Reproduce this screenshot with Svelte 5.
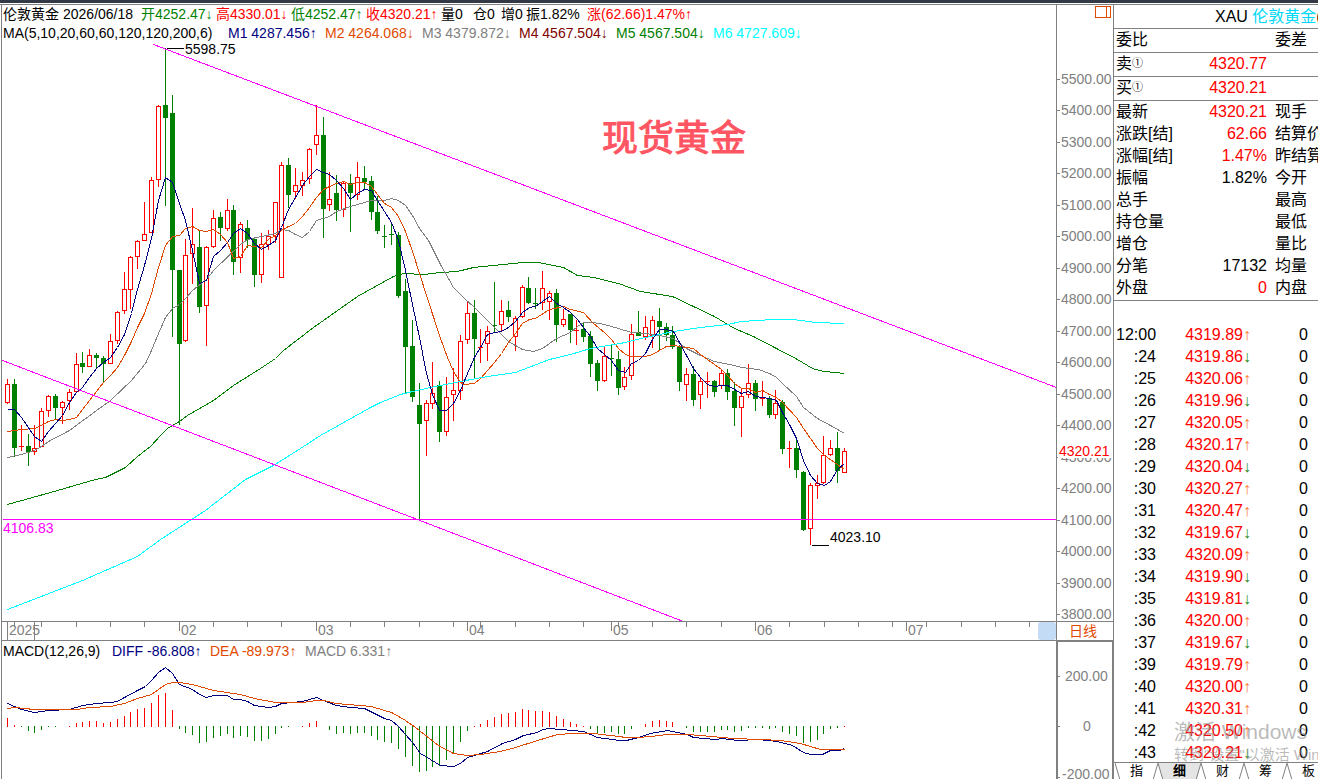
<script lang="ts">
	type Candle = [up: number, top: number, bottom: number, high: number, low: number];

	const candles: Candle[] = [
		[1, 384, 402, 379, 403], [0, 384, 447, 379, 456], [1, 446, 446, 425, 450], [0, 446, 451, 434, 465],
		[1, 448, 451, 425, 454], [1, 411, 446, 408, 446], [1, 396, 410, 395, 416], [0, 396, 407, 394, 419],
		[1, 402, 407, 401, 423], [1, 392, 400, 389, 409], [1, 364, 391, 353, 391], [0, 363, 366, 352, 372],
		[1, 355, 366, 349, 366], [0, 355, 357, 353, 368], [0, 358, 363, 356, 382], [1, 341, 363, 334, 363],
		[1, 312, 340, 311, 343], [1, 289, 310, 272, 313], [1, 257, 289, 256, 308], [1, 241, 256, 240, 268],
		[1, 234, 240, 202, 240], [1, 180, 232, 177, 232], [1, 106, 179, 105, 186], [0, 105, 117, 48, 205],
		[0, 113, 269, 95, 336], [0, 270, 343, 270, 424], [1, 255, 340, 239, 341], [1, 244, 253, 208, 283],
		[0, 247, 306, 230, 312], [1, 247, 305, 246, 345], [1, 218, 246, 210, 247], [0, 217, 227, 212, 240],
		[1, 210, 228, 199, 230], [0, 210, 261, 205, 274], [1, 224, 257, 222, 272], [0, 228, 239, 220, 247],
		[0, 239, 274, 238, 286], [1, 244, 274, 233, 282], [1, 236, 244, 230, 249], [1, 202, 236, 202, 242],
		[1, 165, 277, 162, 277], [0, 165, 194, 158, 207], [1, 185, 191, 168, 198], [1, 180, 185, 172, 195],
		[1, 149, 178, 148, 183], [1, 135, 144, 105, 154], [0, 135, 208, 117, 237], [1, 199, 204, 172, 210],
		[0, 193, 209, 175, 220], [1, 183, 209, 181, 216], [0, 183, 192, 174, 231], [1, 177, 194, 162, 199],
		[0, 178, 181, 166, 189], [0, 181, 211, 176, 219], [0, 212, 230, 196, 233], [0, 236, 236, 225, 247],
		[0, 234, 234, 223, 244], [0, 235, 295, 232, 297], [0, 291, 346, 279, 393], [0, 346, 396, 320, 401],
		[0, 405, 423, 383, 519], [1, 403, 420, 400, 455], [1, 393, 403, 362, 408], [0, 385, 431, 381, 441],
		[1, 397, 431, 377, 435], [1, 390, 394, 368, 420], [1, 341, 390, 335, 399], [1, 313, 339, 302, 343],
		[0, 313, 338, 300, 378], [1, 347, 347, 329, 362], [1, 331, 343, 326, 360], [0, 325, 325, 282, 331],
		[1, 311, 324, 300, 330], [0, 310, 316, 301, 321], [1, 318, 336, 316, 350], [1, 287, 316, 285, 317],
		[0, 288, 302, 277, 303], [0, 303, 303, 288, 308], [1, 288, 302, 271, 309], [1, 293, 301, 291, 319],
		[0, 293, 324, 289, 341], [1, 319, 324, 309, 326], [0, 314, 329, 314, 342], [1, 330, 330, 320, 344],
		[0, 329, 336, 323, 341], [0, 336, 363, 331, 376], [0, 363, 380, 360, 390], [1, 356, 380, 347, 381],
		[0, 358, 358, 345, 375], [0, 359, 387, 351, 394], [1, 377, 386, 367, 389], [1, 334, 375, 324, 379],
		[0, 332, 335, 311, 335], [1, 327, 336, 316, 339], [1, 320, 335, 316, 347], [0, 321, 326, 308, 350],
		[0, 327, 334, 323, 340], [0, 335, 346, 326, 348], [0, 346, 381, 345, 390], [1, 374, 384, 368, 400],
		[0, 374, 399, 366, 405], [1, 381, 394, 378, 408], [1, 381, 381, 372, 397], [0, 381, 391, 380, 396],
		[1, 373, 385, 369, 388], [0, 373, 391, 369, 399], [0, 391, 407, 382, 425], [1, 396, 407, 388, 436],
		[1, 383, 394, 364, 397], [0, 383, 398, 380, 410], [1, 398, 398, 381, 405], [0, 398, 414, 396, 417],
		[1, 403, 414, 390, 418], [0, 402, 448, 400, 453], [1, 448, 448, 441, 467], [0, 448, 469, 438, 477],
		[0, 472, 529, 471, 530], [1, 485, 528, 483, 544], [1, 483, 485, 475, 498], [1, 455, 482, 436, 483],
		[1, 448, 454, 440, 455], [0, 448, 470, 432, 482], [1, 451, 472, 448, 472]
	];

	const bars = [
		9, 2, -1, -5, -7, -4, -1, -1, 0, 1, 4, 5, 6, 6, 4, 5, 8, 11, 15, 18, 19, 24, 32, 34, 17, -3, -7, -9,
		-17, -16, -12, -10, -8, -12, -10, -11, -15, -15, -13, -8, -2, -1, 0, 1, 4, 6, 0, -4, -8, -7, -8, -7,
		-7, -10, -14, -16, -17, -23, -31, -40, -46, -45, -41, -40, -34, -27, -16, -5, 1, 3, 7, 10, 13, 14,
		15, 18, 17, 16, 16, 15, 11, 8, 5, 3, 1, -3, -7, -7, -6, -8, -8, -3, 0, 3, 6, 7, 6, 5, 0, -2, -6, -6,
		-6, -6, -4, -4, -6, -5, -2, -2, -2, -3, -2, -6, -8, -10, -17, -16, -14, -8, -3, -2, 1
	];

	const ma5 =
		'7,409 14,409 21,417 34,436 41,441 48,431 55,423 62,415 69,402 76,392 82,387 89,377 96,368 103,362 110,357 117,347 124,334 131,313 137,289 144,265 151,238 158,200 165,177 172,182 179,203 185,220 192,250 199,283 206,280 213,256 220,250 227,242 233,233 240,228 247,233 254,243 261,249 268,245 275,240 281,227 288,209 295,197 302,185 309,176 316,169 323,172 329,174 336,180 343,188 350,199 357,193 364,189 371,190 377,200 384,211 391,222 398,240 405,270 412,304 419,337 426,373 432,394 439,410 446,410 453,403 460,390 467,373 474,357 480,347 487,334 494,332 501,331 508,327 515,321 522,312 529,307 535,306 542,301 549,296 556,303 563,307 570,312 577,319 583,327 590,336 597,348 604,354 611,360 618,370 625,372 631,363 638,360 645,353 652,339 659,329 666,329 673,331 679,342 686,355 693,368 700,377 707,384 714,386 721,385 727,385 734,389 741,393 748,391 755,396 762,397 769,398 776,400 782,412 789,424 796,438 803,460 810,475 817,483 824,485 830,481 837,469 844,463';
	const ma10 =
		'7,431 14,430 21,429 34,428 41,425 48,421 55,419 62,420 69,419 76,417 82,409 96,391 103,382 110,375 117,367 124,355 131,341 137,327 144,313 151,293 158,267 165,245 172,236 179,235 185,228 192,226 199,230 206,231 213,229 220,234 227,242 233,258 240,256 247,245 254,246 261,247 268,239 275,235 281,230 288,226 295,223 302,216 309,207 316,197 323,189 329,186 336,183 343,181 350,184 357,182 364,182 371,186 377,194 384,203 391,207 398,216 405,231 412,251 419,273 426,295 440,338 447,357 453,371 460,382 464,384 474,383 480,378 487,370 494,362 501,353 508,342 515,333 522,323 529,319 535,318 549,309 563,306 570,309 583,312 593,323 604,332 611,339 618,348 625,354 631,356 645,356 652,354 659,350 666,346 673,345 686,347 693,348 700,354 707,359 721,369 727,375 734,383 741,388 748,388 755,392 762,390 769,394 776,397 782,402 796,417 803,428 810,438 817,448 824,455 837,464 844,469';
	const ma20 =
		'7,457 21,454 34,450 41,446 48,441 69,430 96,410 110,400 131,380 145,363 151,350 158,333 165,317 172,308 179,304 185,298 192,290 206,279 213,270 240,244 247,239 261,236 275,233 281,229 288,230 295,234 302,237 309,231 316,220 329,216 336,211 350,206 371,200 384,200 391,198 398,200 405,205 412,215 419,228 428,240 440,264 453,287 464,298 474,307 487,320 494,327 508,341 522,349 533,351 542,348 549,343 556,338 570,332 577,326 583,322 593,322 604,324 618,328 631,332 645,333 659,335 673,338 679,343 686,348 700,355 714,361 734,365 741,367 758,369 769,373 776,377 782,383 796,396 803,407 817,418 830,425 844,433';
	const ma60 =
		'7,504 50,492 95,479 105,477 125,467 137,456 150,446 160,435 167,428 179,421 187,415 213,400 233,385 260,368 275,358 283,350 313,327 357,296 393,276 403,273 423,274 440,272 457,271 473,267 523,262 538,262 563,267 577,275 593,277 618,283 640,291 672,296 693,306 714,316 734,328 753,336 776,348 797,359 812,368 823,371 835,372 844,373';
	const ma200 =
		'7,609 33,599 82,580 137,556 160,539 205,510 245,479 273,465 300,448 320,435 370,407 380,402 400,394 412,391 430,387 460,381 487,376 515,372 549,359 570,354 590,348 620,343 645,337 673,331 700,327 727,324 741,321 772,319 793,319 815,322 844,323';
	const diff =
		'7,703 14,706 21,709 34,712 48,710 69,709 82,705 96,703 110,702 117,701 124,697 137,690 145,686 151,680 158,672 165,667 172,673 179,684 192,689 199,694 206,697 213,695 227,695 233,699 240,699 247,701 254,705 268,707 275,706 281,703 302,701 316,697 323,700 336,705 350,707 364,708 384,718 391,720 398,726 412,742 420,753 430,759 440,765 453,766 460,763 467,757 487,751 502,743 515,739 523,735 537,732 542,729 549,728 583,731 597,737 612,739 619,740 626,740 638,737 650,733 667,730 687,734 693,737 715,739 722,738 737,740 758,739 777,741 792,745 803,752 810,754 822,754 830,750 839,750 844,748';
	const dea =
		'7,708 14,707 34,709 76,709 89,707 110,706 124,703 137,698 151,694 165,684 172,682 179,682 192,684 213,690 240,694 254,698 275,702 302,702 316,700 323,700 336,703 371,706 384,710 391,712 405,720 415,727 438,745 453,753 467,755 480,754 500,751 515,747 537,740 557,734 573,733 593,733 610,735 626,737 638,737 650,736 667,734 687,734 700,735 722,737 733,738 760,739 780,740 800,743 820,749 844,749';

	const quote = [
		{ text: '开4252.47↓', tone: 'green' },
		{ text: '高4330.01↓', tone: 'red' },
		{ text: '低4252.47↑', tone: 'green' },
		{ text: '收4320.21↑', tone: 'red' },
		{ text: '量0', tone: '' },
		{ text: '仓0', tone: '' },
		{ text: '增0', tone: '' },
		{ text: '振1.82%', tone: '' },
		{ text: '涨(62.66)1.47%↑', tone: 'red' }
	];

	const averages = [
		{ text: 'M1 4287.456↑', tone: 'navy' },
		{ text: 'M2 4264.068↓', tone: 'orange' },
		{ text: 'M3 4379.872↓', tone: 'gray' },
		{ text: 'M4 4567.504↓', tone: 'maroon' },
		{ text: 'M5 4567.504↓', tone: 'green' },
		{ text: 'M6 4727.609↓', tone: 'cyan' }
	];

	const prices = Array.from({ length: 18 }, (_, i) => ({
		label: (5500 - i * 100).toFixed(2),
		y: Math.floor(79 + i * 31.5)
	}));

	const minorTicks = [14, 41, 76, 110, 144, 213, 247, 281, 350, 384, 419, 453, 480, 515, 549, 583, 618, 652, 686, 721, 789, 824, 858, 892, 926, 961, 995, 1029];
	const months = [
		{ x: 179, label: '02' },
		{ x: 316, label: '03' },
		{ x: 467, label: '04' },
		{ x: 611, label: '05' },
		{ x: 755, label: '06' },
		{ x: 906, label: '07' }
	];

	const stats = [
		['最新', '4320.21', 'red', '现手'],
		['涨跌[结]', '62.66', 'red', '结算价'],
		['涨幅[结]', '1.47%', 'red', '昨结算'],
		['振幅', '1.82%', '', '今开'],
		['总手', '', '', '最高'],
		['持仓量', '', '', '最低'],
		['增仓', '', '', '量比'],
		['分笔', '17132', '', '均量'],
		['外盘', '0', 'red', '内盘']
	];

	const trades = [
		['12:00', '4319.89', 1], [':24', '4319.86', 0], [':25', '4320.06', 1], [':26', '4319.96', 0],
		[':27', '4320.05', 1], [':28', '4320.17', 1], [':29', '4320.04', 0], [':30', '4320.27', 1],
		[':31', '4320.47', 1], [':32', '4319.67', 0], [':33', '4320.09', 1], [':34', '4319.90', 0],
		[':35', '4319.81', 0], [':36', '4320.00', 1], [':37', '4319.67', 0], [':39', '4319.79', 1],
		[':40', '4320.00', 1], [':41', '4320.31', 1], [':42', '4320.50', 1], [':43', '4320.21', 0]
	];

	const tabs = ['指', '细', '财', '筹', '板'];
	let activeTab = $state('细');

	const xAt = (i: number) => Math.round(7 + i * 6.8607);
</script>

<div class="terminal">
	<div class="titlebar"></div>
	<div class="workspace">
		<main class="charts">
			<header class="legend">
				<div class="quote-row">
					<span>伦敦黄金</span>
					<span>2026/06/18</span>
					{#each quote as q}
						<span class={q.tone}>{q.text}</span>
					{/each}
				</div>
				<div class="ma-row">
					<span>MA(5,10,20,60,60,120,120,200,6)</span>
					{#each averages as m}
						<span class={m.tone}>{m.text}</span>
					{/each}
				</div>
			</header>

			<svg class="price-chart" viewBox="2 43 1054 578" preserveAspectRatio="xMinYMin meet">
				<g class="crisp">
					{#each candles as [up, top, bottom, high, low], i}
						{@const x = xAt(i)}
						<rect {x} y={high} width="1" height={low - high + 1} class={up ? 'up' : 'down'} />
						<rect x={x - 2} y={top} width="5" height={bottom - top + 1} class={up ? 'up' : 'down'} />
						{#if up && bottom - top > 1}
							<rect x={x - 1} y={top + 1} width="3" height={bottom - top - 1} fill="#fff" />
						{/if}
					{/each}
				</g>
				<g class="line crisp" transform="translate(0.5 0.5)">
					<polyline points={ma60} stroke="#008000" />
					<polyline points={ma20} stroke="#808080" />
					<polyline points={ma10} stroke="#e04a00" />
					<polyline points={ma200} stroke="#00ffff" />
					<polyline points={ma5} stroke="#000080" />
					<path d="M153 44 L1056 387 M2 360 L683 621 M2 519 H1056" stroke="#ff00ff" />
					<path d="M166 48 H183 M811 545 H828" stroke="#000" />
				</g>
				<text x="185" y="54">5598.75</text>
				<text x="830" y="542">4023.10</text>
				<text x="3" y="533" fill="#ff00ff">4106.83</text>
				<text x="602" y="151" class="title">现货黄金</text>
			</svg>

			<svg class="time-axis" viewBox="2 621 1054 20" preserveAspectRatio="xMinYMin meet">
				<g class="crisp" fill="#808080">
					<rect x="2" y="621" width="1054" height="1" />
					<rect x="2" y="640" width="1054" height="1" />
					<rect x="7" y="621" width="1" height="19" />
					<rect x="34" y="621" width="1" height="19" />
					{#each minorTicks as x}
						<rect {x} y="621" width="1" height="6" />
					{/each}
					{#each months as m}
						<rect x={m.x} y="621" width="1" height="10" />
					{/each}
				</g>
				<rect x="1038" y="622" width="18" height="18" rx="3" fill="#c4dbf6" />
				<text x="9" y="635" class="muted">2025</text>
				{#each months as m}
					<text x={m.x + 2} y="635" class="muted">{m.label}</text>
				{/each}
			</svg>

			<div class="macd-row">
				<span>MACD(12,26,9)</span>
				<span class="navy">DIFF -86.808↑</span>
				<span class="orange">DEA -89.973↑</span>
				<span class="gray">MACD 6.331↑</span>
			</div>
			<svg class="macd-chart" viewBox="2 662 1054 117" preserveAspectRatio="xMinYMin meet">
				<g class="crisp">
					{#each bars as v, i}
						{#if v !== 0}
							<rect
								x={xAt(i)}
								y={v > 0 ? 727 - v : 726}
								width="1"
								height={Math.abs(v)}
								class={v > 0 ? 'up' : 'down'}
							/>
						{/if}
					{/each}
				</g>
				<g class="line crisp" transform="translate(0.5 0.5)">
					<polyline points={diff} stroke="#000080" />
					<polyline points={dea} stroke="#e04a00" />
				</g>
			</svg>
		</main>

		<aside class="axis">
			<svg class="price-axis" viewBox="1057 5 56 616">
				<g class="crisp" fill="none" stroke="#e04a00">
					<path d="M1095.5 6.5 H1110.5 V17.5 H1095.5 Z M1106.5 6.5 V17.5" />
				</g>
				{#each prices as p}
					<rect x="1057" y={p.y} width="3" height="1" fill="#808080" class="crisp" />
					<text x="1061" y={p.y + 5} class="muted">{p.label}</text>
				{/each}
				<rect x="1058" y="444" width="54" height="14" fill="#fff" />
				<text x="1059" y="456" fill="#ff0000">4320.21</text>
			</svg>
			<button class="period">日线</button>
			<svg class="macd-axis" viewBox="1057 641 56 138">
				<g class="crisp" fill="#808080">
					<rect x="1057" y="641" width="56" height="1" />
					<rect x="1057" y="641" width="1" height="138" />
					<rect x="1112" y="641" width="1" height="138" />
					<rect x="1057" y="676" width="3" height="1" />
					<rect x="1057" y="726" width="3" height="1" />
					<rect x="1057" y="777" width="3" height="1" />
				</g>
				<text x="1065" y="681" class="muted">200.00</text>
				<text x="1083" y="731" class="muted">0</text>
				<text x="1062" y="779" class="muted">-200.00</text>
			</svg>
		</aside>

		<section class="panel">
			<h1>XAU <span>伦敦黄金</span>(</h1>
			<div class="row"><span>委比</span><span></span><span>委差</span></div>
			<div class="row"><span>卖<small>①</small></span><span class="red">4320.77</span></div>
			<div class="row"><span>买<small>①</small></span><span class="red">4320.21</span></div>

			<div class="summary">
				<table class="stats">
					<tbody>
						{#each stats as [name, value, tone, other]}
							<tr>
								<th>{name}</th>
								<td class={tone}>{value}</td>
								<th>{other}</th>
							</tr>
						{/each}
					</tbody>
				</table>
			</div>

			<table class="trades">
				<tbody>
					{#each trades as [time, price, up]}
						<tr>
							<td class="time">{time}</td>
							<td class="price red">{price}<i class:rise={up}>{up ? '↑' : '↓'}</i></td>
							<td class="volume">0</td>
						</tr>
					{/each}
				</tbody>
			</table>

			<nav class="tabs">
				{#each tabs as tab}
					<button class:active={tab === activeTab} onclick={() => (activeTab = tab)}>
						<svg viewBox="0 0 43 17" aria-hidden="true">
							<path d="M0 0 L5 17 H38 L43 0" />
						</svg>
						<span>{tab}</span>
					</button>
				{/each}
			</nav>

			<div class="watermark">
				<p>激活 Windows</p>
				<p>转到"设置"以激活 Windows。</p>
			</div>
		</section>
	</div>
</div>

<style>
	:global(body) {
		background: #fff;
	}
	.terminal {
		font-family: 'Liberation Sans', 'Noto Sans CJK SC', sans-serif;
		font-size: 14px;
		color: #000;
		overflow: hidden;
	}
	.titlebar {
		height: 3px;
		background: #333a46;
		margin-bottom: 1px;
	}
	.workspace {
		display: grid;
		grid-template-columns: minmax(0, 1fr) 57px 205px;
		border-top: 1px solid #808080;
	}
	svg {
		display: block;
		width: 100%;
	}
	.crisp {
		shape-rendering: crispEdges;
	}
	text {
		font-size: 14px;
	}

	.red {
		color: #ff0000;
	}
	.green {
		color: #008000;
	}
	.navy {
		color: #000080;
	}
	.orange {
		color: #e04a00;
	}
	.gray {
		color: #808080;
	}
	.maroon {
		color: #800000;
	}
	.cyan {
		color: #00ffff;
	}
	.muted {
		fill: #808080;
	}
	.up {
		fill: #ff0000;
	}
	.down {
		fill: #008000;
	}

	.charts {
		margin-left: 1px;
		border-left: 1px solid #808080;
		overflow: hidden;
	}
	.legend {
		height: 38px;
	}
	.quote-row,
	.ma-row,
	.macd-row {
		display: grid;
		padding-left: 1px;
		white-space: nowrap;
		line-height: 19px;
	}
	.quote-row {
		grid-template-columns: 60px 78px repeat(4, 75px) 32px 28px 25px 61px auto;
	}
	.ma-row {
		grid-template-columns: 225px repeat(6, 97px);
	}
	.macd-row {
		grid-template-columns: 109px 98px 95px auto;
		line-height: 21px;
	}
	.price-chart {
		height: 578px;
	}
	.time-axis {
		height: 20px;
	}
	.macd-chart {
		height: 117px;
	}
	.line {
		fill: none;
		stroke-width: 1;
	}
	.title {
		font-size: 36px;
		fill: #ff5562;
		stroke: #ff5562;
		stroke-width: 1;
	}

	.axis {
		border-left: 1px solid #808080;
	}
	.price-axis {
		height: 616px;
	}
	.period {
		display: block;
		width: 100%;
		height: 20px;
		padding: 0 4px 0 0;
		border: solid #808080;
		border-width: 1px 0;
		background: #fff;
		color: #e04a00;
		font: inherit;
		line-height: 18px;
	}
	.macd-axis {
		height: 138px;
	}

	.panel {
		position: relative;
		border-left: 1px solid #808080;
		font-size: 16px;
		white-space: nowrap;
		overflow: hidden;
	}
	h1 {
		margin: 0;
		padding-left: 101px;
		font-size: 16px;
		font-weight: normal;
		line-height: 23px;
		border-bottom: 1px solid #808080;
	}
	h1 span {
		color: #00d8f8;
	}
	.row {
		display: grid;
		grid-template-columns: 60px 91px auto;
		padding-left: 2px;
		line-height: 21px;
		height: 23px;
		border-bottom: 1px solid #808080;
	}
	.row span:nth-child(2) {
		text-align: right;
	}
	.row span:nth-child(3) {
		padding-left: 8px;
	}
	small {
		font-size: 11px;
		vertical-align: 2px;
		line-height: 1;
	}
	table {
		table-layout: fixed;
		border-collapse: collapse;
		margin-left: 2px;
	}
	th,
	td {
		height: 22px;
		padding: 0;
		font-weight: normal;
		line-height: 22px;
		text-align: right;
	}
	th {
		text-align: left;
	}
	.summary {
		padding-bottom: 1px;
		border-bottom: 1px solid #808080;
	}
	.stats {
		width: 219px;
	}
	.stats th:first-child {
		width: 60px;
	}
	.stats td {
		width: 91px;
	}
	.stats th:last-child {
		padding-left: 8px;
	}
	.trades {
		width: 192px;
		margin-top: 23px;
	}
	.time {
		width: 40px;
	}
	.price {
		width: 95px;
	}
	i {
		font-style: normal;
		color: #2a8c1c;
	}
	i.rise {
		color: #ff7a30;
	}

	.tabs {
		position: relative;
		display: flex;
		margin-top: -2px;
		padding-left: 1px;
		border-top: 1px solid #808080;
		background: #fff;
	}
	.tabs button {
		position: relative;
		flex: none;
		width: 43px;
		height: 16px;
		padding: 0;
		border: 0;
		background: none;
		font: inherit;
		font-size: 13px;
		line-height: 16px;
	}
	.tabs svg {
		position: absolute;
		inset: 0;
	}
	.tabs path {
		fill: #fff;
		stroke: #808080;
	}
	.tabs span {
		position: relative;
	}
	.tabs .active {
		font-weight: bold;
	}
	.tabs .active path {
		fill: #e4e4e4;
	}

	.watermark {
		position: absolute;
		left: 60px;
		bottom: 14px;
		color: rgba(140, 140, 140, 0.6);
		pointer-events: none;
	}
	.watermark p {
		margin: 0;
		font-size: 15px;
		line-height: 20px;
	}
	.watermark p:first-child {
		font-size: 21px;
		line-height: 26px;
	}
</style>
